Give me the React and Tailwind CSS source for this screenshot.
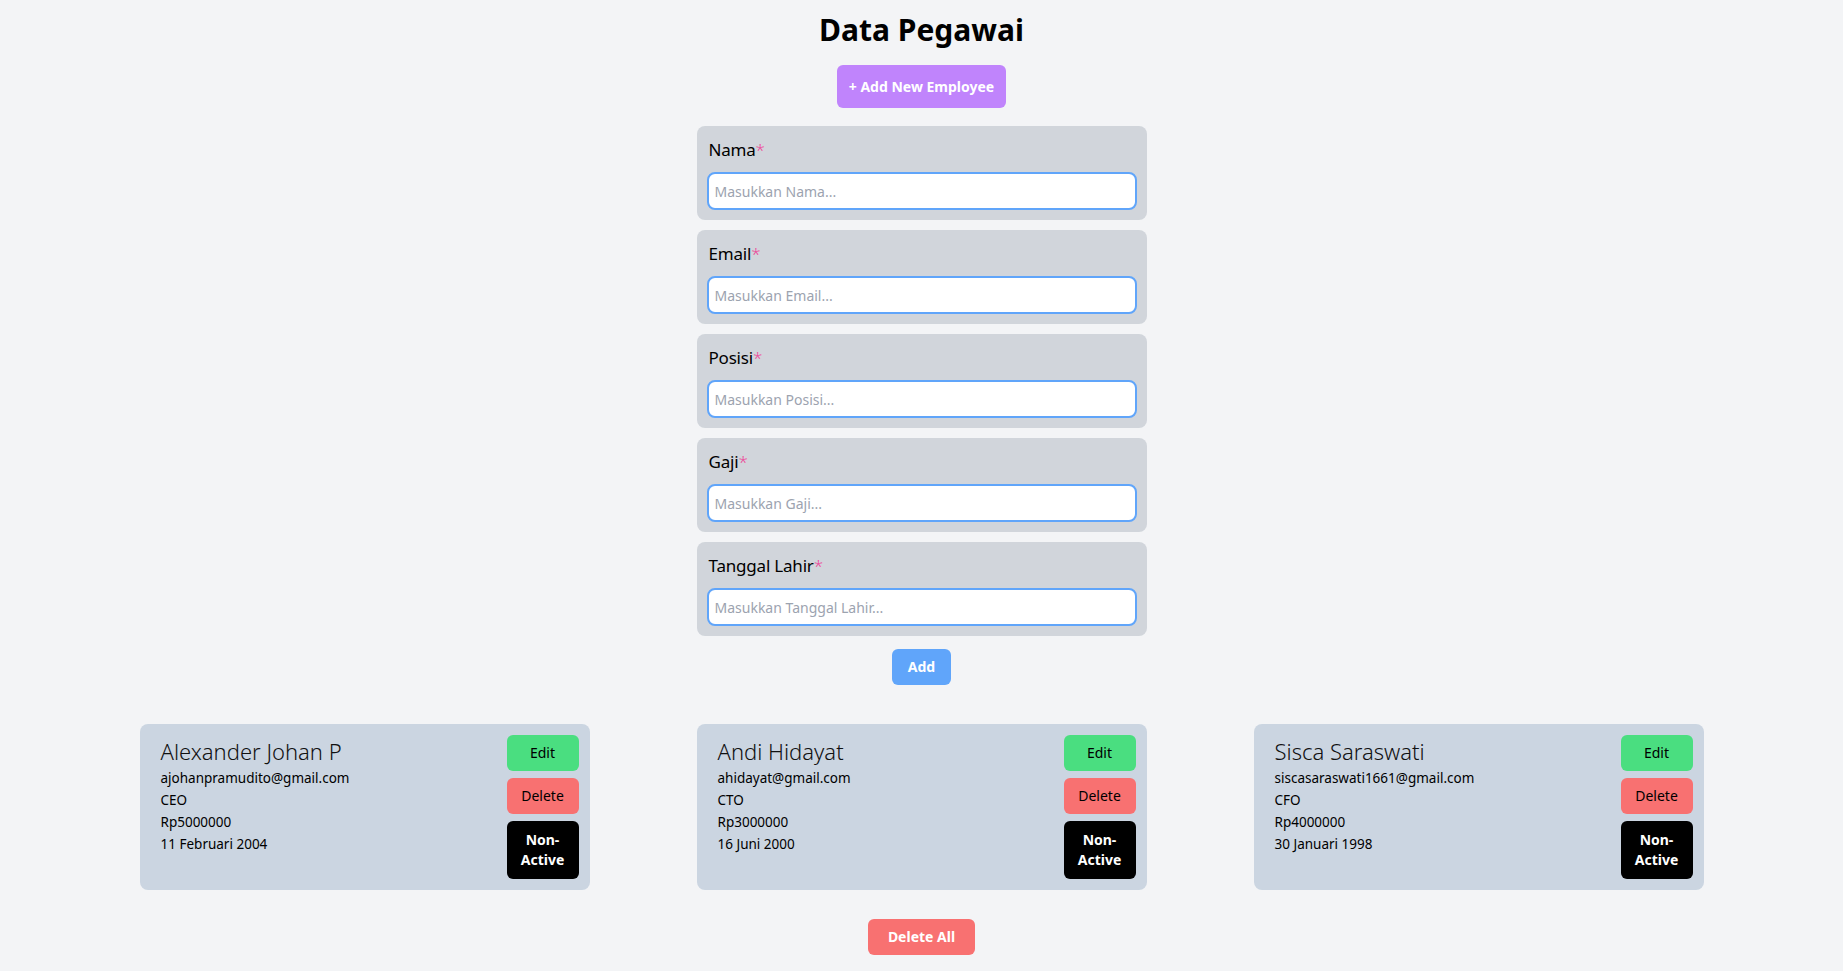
import { useState } from "react"

const fields = [
  { label: "Nama", placeholder: "Masukkan Nama..." },
  { label: "Email", placeholder: "Masukkan Email..." },
  { label: "Posisi", placeholder: "Masukkan Posisi..." },
  { label: "Gaji", placeholder: "Masukkan Gaji..." },
  { label: "Tanggal Lahir", placeholder: "Masukkan Tanggal Lahir..." },
]

const initialEmployees = [
  {
    nama: "Alexander Johan P",
    email: "ajohanpramudito@gmail.com",
    posisi: "CEO",
    gaji: "Rp5000000",
    lahir: "11 Februari 2004",
  },
  {
    nama: "Andi Hidayat",
    email: "ahidayat@gmail.com",
    posisi: "CTO",
    gaji: "Rp3000000",
    lahir: "16 Juni 2000",
  },
  {
    nama: "Sisca Saraswati",
    email: "siscasaraswati1661@gmail.com",
    posisi: "CFO",
    gaji: "Rp4000000",
    lahir: "30 Januari 1998",
  },
]

export default function App() {
  const [employees, setEmployees] = useState(initialEmployees)

  return (
    <div className="min-h-screen bg-[#f3f4f6] text-black font-['Noto_Sans',sans-serif] flex flex-col items-center pt-3 pb-4">
      {/* Heading */}
      <h1 className="text-3xl font-bold leading-9">Data Pegawai</h1>

      <button className="mt-[17px] h-[43px] px-3 rounded-md bg-[#c084fc] text-white text-sm font-bold">
        + Add New Employee
      </button>

      {/* Form */}
      <form className="mt-[18px] w-[450px] flex flex-col gap-[10px]" onSubmit={(e) => e.preventDefault()}>
        {fields.map((f) => (
          <div key={f.label} className="bg-[#d1d5db] rounded-lg p-[10px] flex flex-col gap-2">
            <label className="text-[17px] leading-7 pl-0.5 tracking-[-0.2px]">
              {f.label}
              <span className="text-[#ec4899] font-light">*</span>
            </label>
            <input
              placeholder={f.placeholder}
              className="h-[38px] w-full bg-white border-2 border-[#60a5fa] rounded-lg px-[6px] text-sm placeholder:text-[#9ca3af] outline-none"
            />
          </div>
        ))}
        <div className="flex justify-center mt-[3px]">
          <button className="h-9 px-4 rounded-md bg-[#60a5fa] text-white text-sm font-bold">Add</button>
        </div>
      </form>

      {/* Cards */}
      <div className="mt-[39px] w-full flex justify-center gap-[107px]">
        {employees.map((emp) => (
          <div key={emp.email} className="w-[450px] bg-[#cbd5e1] rounded-lg p-[11px] flex justify-between">
            <div className="pl-[10px]">
              <h3 className="text-[22px] font-light leading-8 text-[#111]">{emp.nama}</h3>
              <p className="text-[13.5px] leading-[22px]">{emp.email}</p>
              <p className="text-[13.5px] leading-[22px]">{emp.posisi}</p>
              <p className="text-[13.5px] leading-[22px]">{emp.gaji}</p>
              <p className="text-[13.5px] leading-[22px]">{emp.lahir}</p>
            </div>
            <div className="w-[72px] flex flex-col gap-[7px]">
              <button className="h-9 rounded-md bg-[#4ade80] text-sm">Edit</button>
              <button className="h-9 rounded-md bg-[#f87171] text-sm">Delete</button>
              <button className="h-[58px] px-2 rounded-md bg-black text-white text-sm font-bold leading-5">
                Non-Active
              </button>
            </div>
          </div>
        ))}
      </div>

      <button
        onClick={() => setEmployees([])}
        className="mt-[29px] h-9 px-5 rounded-md bg-[#f87171] text-white text-sm font-bold"
      >
        Delete All
      </button>
    </div>
  )
}
